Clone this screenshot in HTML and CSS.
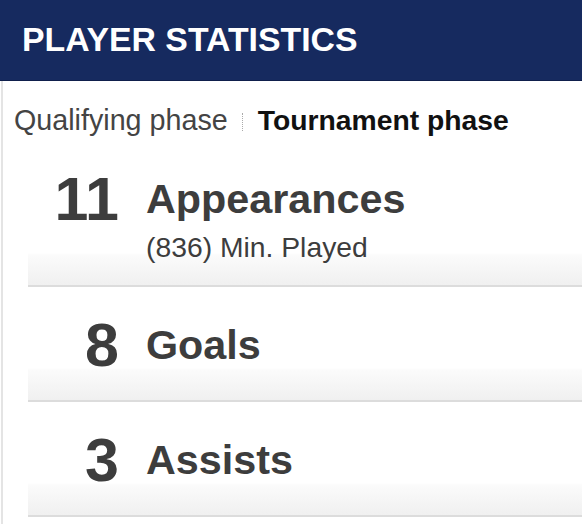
FILE: index.html
```html
<!DOCTYPE html>
<html>
<head>
<meta charset="utf-8">
<link rel="stylesheet" href="styles.css">
</head>
<body>
<div class="header"><h1 class="title">PLAYER STATISTICS</h1></div>
<div class="content">
  <div class="tabs">
    <span class="tab">Qualifying phase</span>
    <span class="sep"></span>
    <span class="tab active">Tournament phase</span>
  </div>
  <div class="row">
    <div class="num">11</div>
    <div class="info">
      <div class="label">Appearances</div>
      <div class="sub">(836) Min. Played</div>
    </div>
  </div>
  <div class="row">
    <div class="num">8</div>
    <div class="info"><div class="label">Goals</div></div>
  </div>
  <div class="row">
    <div class="num">3</div>
    <div class="info"><div class="label">Assists</div></div>
  </div>
</div>
</body>
</html>
```
FILE: styles.css
```css
html, body {
  margin: 0;
  padding: 0;
  background: #fff;
  font-family: "Liberation Sans", Arial, sans-serif;
}
.header {
  height: 81px;
  box-sizing: border-box;
  background: #162a5f;
  border-bottom: 1px solid #0f1f4c;
  display: flex;
  align-items: center;
  padding-left: 22px;
}
.title {
  margin: 0;
  color: #fff;
  font-size: 33.8px;
  font-weight: bold;
  line-height: 1;
}
.content {
  border-left: 2px solid #e4e4e4;
  margin-left: 1px;
  min-height: 443px;
}
.tabs {
  display: flex;
  align-items: center;
  padding: 23px 0 5px 11px;
  height: 32px;
}
.tab {
  font-size: 28.7px;
  line-height: 32px;
  color: #444;
}
.tab.active {
  font-size: 28.3px;
  font-weight: bold;
  color: #111;
}
.sep {
  width: 0;
  height: 18px;
  border-left: 1px dotted #aaa;
  margin: 4px 15px 0 14px;
}
.row {
  margin-left: 25px;
  display: flex;
  min-height: 115px;
  box-sizing: border-box;
  padding: 28px 0 22px;
  border-bottom: 2px solid #dcdcdc;
  background: linear-gradient(to bottom, #fff 0, #fff calc(100% - 32px), #fbfbfb calc(100% - 30px), #f0f0f0 100%);
  color: #3d3d3d;
}
.num {
  width: 91px;
  text-align: right;
  font-size: 61px;
  font-weight: bold;
  line-height: 60px;
}
.info {
  margin-left: 27px;
}
.label {
  margin-top: 10px;
  font-size: 41.3px;
  font-weight: bold;
  line-height: 41px;
}
.sub {
  margin-top: 11px;
  font-size: 28.3px;
  line-height: 32px;
}
```
